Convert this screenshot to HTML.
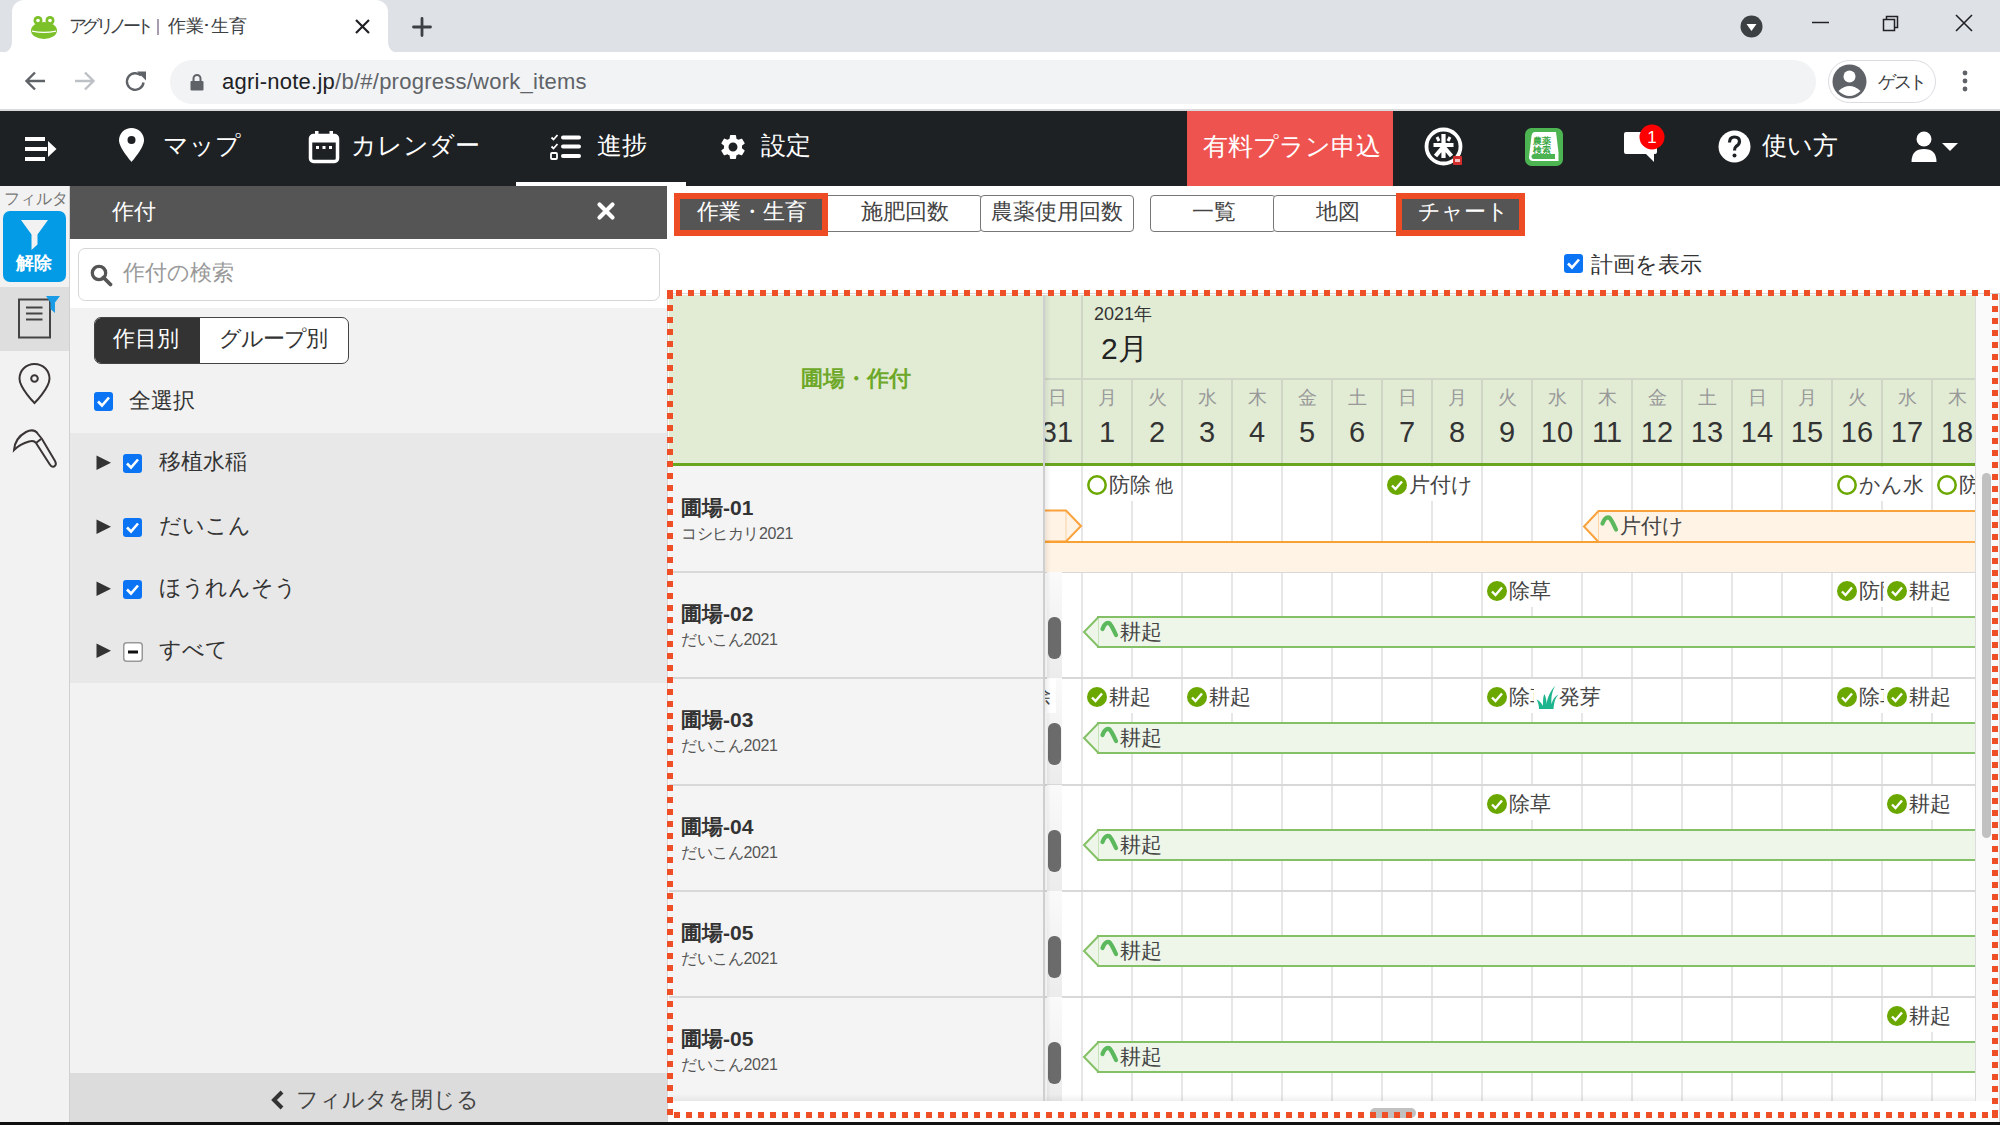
<!DOCTYPE html>
<html><head><meta charset="utf-8">
<style>
*{margin:0;padding:0;box-sizing:border-box}
html,body{width:2000px;height:1125px;overflow:hidden;background:#fff;font-family:"Liberation Sans",sans-serif;color:#333}
.a{position:absolute}
svg{position:absolute;overflow:visible}
.t{position:absolute;white-space:nowrap;line-height:1}
</style></head><body>
<!-- ===== Chrome tab strip ===== -->
<div class="a" style="left:0;top:0;width:2000px;height:53px;background:#dee1e6"></div>
<div class="a" style="left:12px;top:0;width:376px;height:53px;background:#fff;border-radius:12px 12px 0 0"></div>
<svg style="left:0;top:41px" width="12" height="12"><path d="M0 12 Q12 12 12 0 L12 12Z" fill="#fff"/></svg>
<svg style="left:388px;top:41px" width="12" height="12"><path d="M12 12 Q0 12 0 0 L0 12Z" fill="#fff"/></svg>
<!-- frog -->
<svg style="left:31px;top:16px" width="26" height="23" viewBox="0 0 26 23">
<circle cx="7" cy="4.5" r="4.5" fill="#7cc12a"/><circle cx="19" cy="4.5" r="4.5" fill="#7cc12a"/>
<circle cx="7" cy="4.5" r="1.8" fill="#fff"/><circle cx="19" cy="4.5" r="1.8" fill="#fff"/>
<ellipse cx="13" cy="14.5" rx="13" ry="8.5" fill="#7cc12a"/>
<path d="M1 14.5 Q13 17 25 14.5 L25 15.8 Q13 18.3 1 15.8Z" fill="#fff"/>
</svg>
<div class="t" style="left:69px;top:17px;font-size:18px;color:#3c4043;letter-spacing:-4.6px">アグリノート</div><div class="a" style="left:157px;top:19px;width:1.5px;height:16px;background:#a89cb0"></div><div class="t" style="left:168px;top:17px;font-size:18px;color:#3c4043">作<span style="letter-spacing:-2px">業</span><span style="display:inline-block;width:8px;text-align:center;margin-right:1px">･</span>生育</div>
<svg style="left:355px;top:19px" width="15" height="15"><path d="M1 1L14 14M14 1L1 14" stroke="#202124" stroke-width="2.2"/></svg>
<svg style="left:412px;top:17px" width="20" height="20"><path d="M10 1.5V18.5M1.5 10H18.5" stroke="#3c4043" stroke-width="2.8" stroke-linecap="round"/></svg>
<svg style="left:1740px;top:15px" width="23" height="23"><circle cx="11.5" cy="11.5" r="11" fill="#3c4043"/><path d="M6.5 9H16.5L11.5 16Z" fill="#fff"/></svg>
<svg style="left:1812px;top:21px" width="18" height="3"><path d="M0 1.5H17" stroke="#202124" stroke-width="1.5"/></svg>
<svg style="left:1882px;top:14px" width="18" height="18"><path d="M1.5 5.5H12.5V16.5H1.5Z M4.5 5.5V2.5H15.5V13.5H12.5" fill="none" stroke="#202124" stroke-width="1.5"/></svg>
<svg style="left:1955px;top:14px" width="18" height="18"><path d="M1 1L17 17M17 1L1 17" stroke="#202124" stroke-width="1.6"/></svg>
<!-- ===== Toolbar ===== -->
<div class="a" style="left:0;top:52px;width:2000px;height:58px;background:#fff"></div>
<div class="a" style="left:0;top:109px;width:2000px;height:2px;background:#d9dadc"></div>
<svg style="left:24px;top:71px" width="22" height="20"><path d="M21 10H3M11 1.5L2.5 10L11 18.5" fill="none" stroke="#5f6368" stroke-width="2.4"/></svg>
<svg style="left:74px;top:71px" width="22" height="20"><path d="M1 10H19M11 1.5L19.5 10L11 18.5" fill="none" stroke="#bdc1c6" stroke-width="2.4"/></svg>
<svg style="left:124px;top:70px" width="24" height="23"><path d="M19.5 12.5A8.3 8.3 0 1 1 17 5.5" fill="none" stroke="#5f6368" stroke-width="2.4"/><path d="M13 1.5H22V10.5Z" fill="#5f6368"/></svg>
<div class="a" style="left:170px;top:60px;width:1646px;height:44px;background:#f1f3f4;border-radius:22px"></div>
<svg style="left:190px;top:73px" width="14" height="18"><path d="M3.5 8V5.5A3.5 3.5 0 0 1 10.5 5.5V8" fill="none" stroke="#5f6368" stroke-width="2"/><rect x="0.5" y="8" width="13" height="9.5" rx="1" fill="#5f6368"/></svg>
<div class="t" style="left:222px;top:71px;font-size:22px;color:#202124;letter-spacing:0.25px">agri-note.jp<span style="color:#5f6368">/b/#/progress/work_items</span></div>
<div class="a" style="left:1828px;top:60px;width:108px;height:43px;border:1px solid #dadce0;border-radius:22px;background:#fff"></div>
<svg style="left:1832px;top:64px" width="35" height="35"><circle cx="17.5" cy="17.5" r="17" fill="#5f6368"/><circle cx="17.5" cy="12.5" r="6" fill="#fff"/><path d="M6.5 27Q17.5 17 28.5 27Q23 32 17.5 32Q12 32 6.5 27Z" fill="#fff"/></svg>
<div class="t" style="left:1878px;top:73px;font-size:18px;color:#3c4043;letter-spacing:-2.5px">ゲスト</div>
<svg style="left:1961px;top:70px" width="8" height="22"><circle cx="4" cy="3" r="2.4" fill="#5f6368"/><circle cx="4" cy="11" r="2.4" fill="#5f6368"/><circle cx="4" cy="19" r="2.4" fill="#5f6368"/></svg>

<!-- ===== App navbar ===== -->
<div class="a" style="left:0;top:111px;width:2000px;height:75px;background:#1e2124"></div>

<div class="a" style="left:516px;top:182px;width:170px;height:4px;background:#fff"></div>
<div class="a" style="left:1187px;top:111px;width:206px;height:75px;background:#ef5350"></div>
<!-- hamburger arrow -->
<svg style="left:25px;top:136px" width="32" height="26"><rect x="0" y="1" width="20" height="4" fill="#fff"/><rect x="0" y="11" width="22" height="4" fill="#fff"/><rect x="0" y="21" width="20" height="4" fill="#fff"/><path d="M23 5L31.5 13L23 21Z" fill="#fff"/></svg>
<!-- pin -->
<svg style="left:119px;top:128px" width="25" height="34" viewBox="0 0 25 34"><path d="M12.5 0C5.6 0 0 5.5 0 12.3C0 20 12.5 34 12.5 34S25 20 25 12.3C25 5.5 19.4 0 12.5 0Z" fill="#fff"/><circle cx="12.5" cy="12" r="4" fill="#1e2124"/></svg>
<div class="t" style="left:163px;top:133px;font-size:25px;color:#fff">マップ</div>
<!-- calendar -->
<svg style="left:309px;top:131px" width="30" height="32"><rect x="1.5" y="4.5" width="27" height="26" rx="3" fill="none" stroke="#fff" stroke-width="3.5"/><rect x="1.5" y="4.5" width="27" height="7" fill="#fff"/><rect x="6" y="0" width="3.5" height="6" fill="#fff"/><rect x="20.5" y="0" width="3.5" height="6" fill="#fff"/><rect x="7" y="15" width="3" height="3" fill="#fff"/><rect x="13.5" y="15" width="3" height="3" fill="#fff"/><rect x="20" y="15" width="3" height="3" fill="#fff"/></svg>
<div class="t" style="left:351px;top:133px;font-size:25px;color:#fff">カレンダー</div>
<!-- list -->
<svg style="left:550px;top:134px" width="32" height="27"><path d="M1.5 3.5L3.5 5.5L7.5 1M1.5 12.5L3.5 14.5L7.5 10" fill="none" stroke="#fff" stroke-width="1.8"/><rect x="1" y="19" width="6" height="6" rx="1" fill="none" stroke="#fff" stroke-width="1.8"/><rect x="11" y="1.5" width="20" height="4" rx="2" fill="#fff"/><rect x="11" y="10.5" width="20" height="4" rx="2" fill="#fff"/><rect x="11" y="20" width="20" height="4" rx="2" fill="#fff"/></svg>
<div class="t" style="left:597px;top:133px;font-size:25px;color:#fff">進捗</div>
<!-- gear -->
<svg style="left:718px;top:132px" width="30" height="30" viewBox="0 0 24 24"><path fill="#fff" d="M19.14 12.94c.04-.3.06-.61.06-.94 0-.32-.02-.64-.07-.94l2.03-1.58a.49.49 0 0 0 .12-.61l-1.92-3.32a.488.488 0 0 0-.59-.22l-2.39.96c-.5-.38-1.03-.7-1.62-.94l-.36-2.54a.484.484 0 0 0-.48-.41h-3.84c-.24 0-.43.17-.47.41l-.36 2.54c-.59.24-1.13.57-1.62.94l-2.39-.96c-.22-.08-.47 0-.59.22L2.74 8.87c-.12.21-.08.47.12.61l2.03 1.58c-.05.3-.09.63-.09.94s.02.64.07.94l-2.03 1.58a.49.49 0 0 0-.12.61l1.92 3.32c.12.22.37.29.59.22l2.39-.96c.5.38 1.03.7 1.62.94l.36 2.54c.05.24.24.41.48.41h3.84c.24 0 .44-.17.47-.41l.36-2.54c.59-.24 1.13-.56 1.62-.94l2.39.96c.22.08.47 0 .59-.22l1.92-3.32c.12-.22.07-.47-.12-.61l-2.01-1.58zM12 15.6c-1.98 0-3.6-1.62-3.6-3.6s1.62-3.6 3.6-3.6 3.6 1.62 3.6 3.6-1.62 3.6-3.6 3.6z"/></svg>
<div class="t" style="left:761px;top:133px;font-size:25px;color:#fff">設定</div>
<div class="t" style="left:1203px;top:134px;font-size:25px;color:#fff">有料プラン申込</div>
<!-- kome icon -->
<svg style="left:1424px;top:127px" width="40" height="40"><circle cx="19.5" cy="19.5" r="17" fill="none" stroke="#fff" stroke-width="3.8"/><path d="M19.5 7V31M9.5 18H29.5M19.5 19.5L11.5 29M19.5 19.5L27.5 29" stroke="#fff" stroke-width="4.2"/><path d="M13 10L15 14M26 10L24 14" stroke="#fff" stroke-width="3"/><rect x="29" y="29" width="9" height="9" rx="1" fill="#d32f2f"/><rect x="31" y="32" width="5" height="3" fill="#f5c0c0"/></svg>
<!-- book -->
<svg style="left:1525px;top:128px" width="38" height="38"><rect x="0" y="0" width="38" height="38" rx="6.5" fill="#4cb552"/><path d="M10 4H31L33.5 24.5V33H8Q4 33 4 29L6.5 8Q7 4 10 4Z" fill="#fff"/><path d="M9 26H30V31H9Q6.5 31 6.5 28.5Q6.5 26 9 26Z" fill="#4cb552"/><text x="16.5" y="15.5" font-size="8.5" fill="#3aa844" text-anchor="middle" font-weight="bold">農薬</text><text x="16.5" y="24.5" font-size="8.5" fill="#3aa844" text-anchor="middle" font-weight="bold">検索</text></svg>
<!-- chat -->
<svg style="left:1624px;top:130px" width="34" height="33"><path d="M2 2H31Q33 2 33 4V22Q33 24 31 24H30V32L22 24H2Q0 24 0 22V4Q0 2 2 2Z" fill="#fff"/></svg>
<svg style="left:1639px;top:124px" width="26" height="26"><circle cx="13" cy="13" r="12.5" fill="#f00"/><text x="13" y="19" font-size="17" fill="#fff" text-anchor="middle" font-family="Liberation Sans">1</text></svg>
<!-- help -->
<svg style="left:1718px;top:130px" width="33" height="33"><circle cx="16.5" cy="16.5" r="16" fill="#fff"/><path d="M11.5 12.5Q11.5 7 16.5 7Q21.5 7 21.5 11.5Q21.5 14.5 18 16.5Q16.5 17.5 16.5 20.5" fill="none" stroke="#1e2124" stroke-width="3.2"/><circle cx="16.5" cy="25.5" r="2" fill="#1e2124"/></svg>
<div class="t" style="left:1762px;top:133px;font-size:25px;color:#fff">使い方</div>
<!-- user -->
<svg style="left:1910px;top:131px" width="50" height="32"><circle cx="14" cy="8" r="7.5" fill="#fff"/><path d="M1.5 31Q1.5 18 14 18Q26.5 18 26.5 31Z" fill="#fff"/><path d="M32 12H48L40 20Z" fill="#fff"/></svg>

<!-- ===== Left icon strip ===== -->
<div class="a" style="left:0;top:186px;width:70px;height:936px;background:#f2f2f2"></div>
<div class="a" style="left:69px;top:186px;width:1px;height:936px;background:#d0d0d0"></div>
<div class="t" style="left:4px;top:191px;font-size:16px;color:#777">フィルタ</div>
<div class="a" style="left:3px;top:211px;width:63px;height:71px;background:#039be5;border-radius:7px"></div>
<svg style="left:21px;top:220px" width="28" height="32"><path d="M0 0H27L16.5 14.5V24.5L10.5 30V14.5Z" fill="#f2f2f2"/></svg>
<div class="t" style="left:16px;top:254px;font-size:18px;font-weight:bold;color:#fff">解除</div>
<div class="a" style="left:0;top:287px;width:69px;height:64px;background:#dedede"></div>
<svg style="left:18px;top:296px" width="44" height="44"><rect x="1" y="3.5" width="31" height="38" fill="none" stroke="#444" stroke-width="2"/><path d="M8 11.5H24.5M8 17.5H24.5M8 23.5H24.5" stroke="#444" stroke-width="2"/><path d="M28 0H42L37 6.5V17L32.5 13V6.5Z" fill="#1a9be6"/></svg>
<svg style="left:18px;top:363px" width="34" height="42"><path d="M16.5 1C8 1 1.5 7.5 1.5 15.5C1.5 25 16.5 40 16.5 40S31.5 25 31.5 15.5C31.5 7.5 25 1 16.5 1Z" fill="none" stroke="#3a3434" stroke-width="2"/><circle cx="16.5" cy="15.5" r="3.3" fill="none" stroke="#3a3434" stroke-width="2"/></svg>
<svg style="left:12px;top:428px" width="46" height="42"><path d="M2 22Q3 10 14 4Q22 0 26 6L30 11L43 33Q45 37 42 38.5Q39.5 39.5 37.5 36L24 15Q22 12 17 13.5Q8 16 2 22Z" fill="none" stroke="#3a3434" stroke-width="2"/><path d="M24 15L29 11" stroke="#3a3434" stroke-width="2"/></svg>

<!-- ===== Filter panel ===== -->
<div class="a" style="left:70px;top:186px;width:597px;height:936px;background:#f2f2f2"></div>
<div class="a" style="left:70px;top:186px;width:597px;height:53px;background:#555"></div>
<div class="t" style="left:112px;top:201px;font-size:22px;color:#fff">作付</div>
<svg style="left:597px;top:202px" width="18" height="18"><path d="M2.5 2.5L15.5 15.5M15.5 2.5L2.5 15.5" stroke="#fff" stroke-width="4.2" stroke-linecap="round"/></svg>
<div class="a" style="left:70px;top:239px;width:597px;height:69px;background:#fff"></div>
<div class="a" style="left:78px;top:248px;width:582px;height:53px;border:1px solid #d6d6d6;border-radius:7px;background:#fff"></div>
<svg style="left:90px;top:264px" width="23" height="23"><circle cx="9" cy="9" r="6.7" fill="none" stroke="#555" stroke-width="3.3"/><path d="M13.5 13.5L20.5 20.5" stroke="#555" stroke-width="3.8" stroke-linecap="round"/></svg>
<div class="t" style="left:123px;top:262px;font-size:22px;color:#999">作付の検索</div>
<div class="a" style="left:94px;top:317px;width:255px;height:47px;border:1.5px solid #444;border-radius:7px;background:#fff;overflow:hidden"><div class="a" style="left:0;top:0;width:105px;height:47px;background:#333"></div></div>
<div class="t" style="left:113px;top:328px;font-size:22px;color:#fff">作目別</div>
<div class="t" style="left:219px;top:328px;font-size:22px;color:#333;letter-spacing:-1px">グループ別</div>
<svg style="left:94px;top:392px" width="19" height="19"><rect x="0" y="0" width="19" height="19" rx="3" fill="#0b74f5"/><path d="M4 9.5L8 13.5L15 5.5" fill="none" stroke="#fff" stroke-width="2.6"/></svg>
<div class="t" style="left:129px;top:390px;font-size:22px;color:#333">全選択</div>
<div class="a" style="left:70px;top:433px;width:597px;height:250px;background:#e8e8e8"></div>
<svg style="left:96px;top:455px" width="16" height="16"><path d="M0.5 0.5L15 7.8L0.5 15Z" fill="#333"/></svg>
<svg style="left:123px;top:454px" width="19" height="19"><rect x="0" y="0" width="19" height="19" rx="3" fill="#0b74f5"/><path d="M4 9.5L8 13.5L15 5.5" fill="none" stroke="#fff" stroke-width="2.6"/></svg>
<div class="t" style="left:159px;top:451px;font-size:22px;color:#333">移植水稲</div>
<svg style="left:96px;top:519px" width="16" height="16"><path d="M0.5 0.5L15 7.8L0.5 15Z" fill="#333"/></svg>
<svg style="left:123px;top:518px" width="19" height="19"><rect x="0" y="0" width="19" height="19" rx="3" fill="#0b74f5"/><path d="M4 9.5L8 13.5L15 5.5" fill="none" stroke="#fff" stroke-width="2.6"/></svg>
<div class="t" style="left:159px;top:515px;font-size:22px;color:#333">だいこん</div>
<svg style="left:96px;top:581px" width="16" height="16"><path d="M0.5 0.5L15 7.8L0.5 15Z" fill="#333"/></svg>
<svg style="left:123px;top:580px" width="19" height="19"><rect x="0" y="0" width="19" height="19" rx="3" fill="#0b74f5"/><path d="M4 9.5L8 13.5L15 5.5" fill="none" stroke="#fff" stroke-width="2.6"/></svg>
<div class="t" style="left:159px;top:577px;font-size:22px;color:#333">ほうれんそう</div>
<svg style="left:96px;top:643px" width="16" height="16"><path d="M0.5 0.5L15 7.8L0.5 15Z" fill="#333"/></svg>
<svg style="left:123px;top:642px" width="20" height="20"><rect x="0.75" y="0.75" width="18.5" height="18.5" rx="3" fill="#fff" stroke="#999" stroke-width="1.5"/><rect x="5" y="8.5" width="10" height="3" fill="#111"/></svg>
<div class="t" style="left:159px;top:639px;font-size:22px;color:#333">すべて</div>

<div class="a" style="left:70px;top:1073px;width:597px;height:49px;background:#dcdcdc"></div>
<svg style="left:270px;top:1090px" width="15" height="20"><path d="M12 2L4 10L12 18" fill="none" stroke="#333" stroke-width="4"/></svg>
<div class="t" style="left:296px;top:1089px;font-size:22px;color:#444">フィルタを閉じる</div>
<div class="a" style="left:0;top:1122px;width:2000px;height:3px;background:#111"></div>
<!-- CHART -->

<!-- ===== Main: tabs ===== -->
<div class="a" style="left:822px;top:195px;width:160px;height:37px;border:1.5px solid #777;border-radius:4px;background:#fff"></div>
<div class="a" style="left:980px;top:195px;width:154px;height:37px;border:1.5px solid #777;border-radius:4px;background:#fff"></div>
<div class="a" style="left:674px;top:193px;width:154px;height:43px;background:#555;border:6px solid #ee4c24"></div>
<div class="t" style="left:697px;top:201px;font-size:22px;color:#fff">作業・生育</div>
<div class="t" style="left:861px;top:201px;font-size:22px;color:#444">施肥回数</div>
<div class="t" style="left:991px;top:201px;font-size:22px;color:#444">農薬使用回数</div>
<div class="a" style="left:1150px;top:195px;width:126px;height:37px;border:1.5px solid #777;border-radius:4px;background:#fff"></div>
<div class="a" style="left:1273px;top:195px;width:130px;height:37px;border:1.5px solid #777;border-radius:4px;background:#fff"></div>
<div class="a" style="left:1396px;top:193px;width:129px;height:43px;background:#555;border:6px solid #ee4c24"></div>
<div class="t" style="left:1192px;top:201px;font-size:22px;color:#444">一覧</div>
<div class="t" style="left:1316px;top:201px;font-size:22px;color:#444">地図</div>
<div class="t" style="left:1418px;top:201px;font-size:22px;color:#fff">チャート</div>
<svg style="left:1564px;top:254px" width="19" height="19"><rect x="0" y="0" width="19" height="19" rx="3" fill="#0b74f5"/><path d="M4 9.5L8 13.5L15 5.5" fill="none" stroke="#fff" stroke-width="2.6"/></svg>
<div class="t" style="left:1591px;top:254px;font-size:22px;color:#333">計画を表示</div>

<div class="a" style="left:667px;top:293px;width:1333px;height:829px;border-top:1px solid #d6d6d6;border-left:1px solid #d6d6d6;background:#fff"></div>
<div class="a" style="left:1999px;top:293px;width:1px;height:829px;background:#d6d6d6"></div>
<div class="a" style="left:669px;top:295px;width:376px;height:169px;background:#e2ecd5"></div>
<div class="t" style="left:801px;top:368px;font-size:22px;font-weight:bold;color:#6ea829">圃場・作付</div>
<div class="a" style="left:669px;top:466px;width:374px;height:106px;background:#f4f4f4"></div>
<div class="t" style="left:681px;top:497px;font-size:21px;font-weight:bold;color:#333">圃場-01</div>
<div class="t" style="left:681px;top:526px;font-size:16px;color:#555;letter-spacing:-0.4px">コシヒカリ2021</div>
<div class="a" style="left:669px;top:572px;width:374px;height:106px;background:#f4f4f4"></div>
<div class="t" style="left:681px;top:603px;font-size:21px;font-weight:bold;color:#333">圃場-02</div>
<div class="t" style="left:681px;top:632px;font-size:16px;color:#555;letter-spacing:-0.4px">だいこん2021</div>
<div class="a" style="left:669px;top:571px;width:376px;height:2px;background:#d8d8d8"></div>
<div class="a" style="left:669px;top:678px;width:374px;height:106px;background:#f4f4f4"></div>
<div class="t" style="left:681px;top:709px;font-size:21px;font-weight:bold;color:#333">圃場-03</div>
<div class="t" style="left:681px;top:738px;font-size:16px;color:#555;letter-spacing:-0.4px">だいこん2021</div>
<div class="a" style="left:669px;top:677px;width:376px;height:2px;background:#d8d8d8"></div>
<div class="a" style="left:669px;top:785px;width:374px;height:106px;background:#f4f4f4"></div>
<div class="t" style="left:681px;top:816px;font-size:21px;font-weight:bold;color:#333">圃場-04</div>
<div class="t" style="left:681px;top:845px;font-size:16px;color:#555;letter-spacing:-0.4px">だいこん2021</div>
<div class="a" style="left:669px;top:784px;width:376px;height:2px;background:#d8d8d8"></div>
<div class="a" style="left:669px;top:891px;width:374px;height:106px;background:#f4f4f4"></div>
<div class="t" style="left:681px;top:922px;font-size:21px;font-weight:bold;color:#333">圃場-05</div>
<div class="t" style="left:681px;top:951px;font-size:16px;color:#555;letter-spacing:-0.4px">だいこん2021</div>
<div class="a" style="left:669px;top:890px;width:376px;height:2px;background:#d8d8d8"></div>
<div class="a" style="left:669px;top:997px;width:374px;height:104px;background:#f4f4f4"></div>
<div class="t" style="left:681px;top:1028px;font-size:21px;font-weight:bold;color:#333">圃場-05</div>
<div class="t" style="left:681px;top:1057px;font-size:16px;color:#555;letter-spacing:-0.4px">だいこん2021</div>
<div class="a" style="left:669px;top:996px;width:376px;height:2px;background:#d8d8d8"></div>
<div class="a" style="left:1045px;top:295px;width:930px;height:806px;overflow:hidden"><div class="a" style="left:-1045px;top:-295px;width:2000px;height:1125px">
<div class="a" style="left:1045px;top:295px;width:930px;height:169px;background:#e2ecd5"></div>
<div class="a" style="left:1045px;top:378px;width:930px;height:1.5px;background:#cfd6c6"></div>
<div class="a" style="left:1081px;top:295px;width:1.5px;height:169px;background:#cfd6c6"></div>
<div class="a" style="left:1131px;top:379px;width:1.5px;height:85px;background:#cfd6c6"></div>
<div class="a" style="left:1181px;top:379px;width:1.5px;height:85px;background:#cfd6c6"></div>
<div class="a" style="left:1231px;top:379px;width:1.5px;height:85px;background:#cfd6c6"></div>
<div class="a" style="left:1281px;top:379px;width:1.5px;height:85px;background:#cfd6c6"></div>
<div class="a" style="left:1331px;top:379px;width:1.5px;height:85px;background:#cfd6c6"></div>
<div class="a" style="left:1381px;top:379px;width:1.5px;height:85px;background:#cfd6c6"></div>
<div class="a" style="left:1431px;top:379px;width:1.5px;height:85px;background:#cfd6c6"></div>
<div class="a" style="left:1481px;top:379px;width:1.5px;height:85px;background:#cfd6c6"></div>
<div class="a" style="left:1531px;top:379px;width:1.5px;height:85px;background:#cfd6c6"></div>
<div class="a" style="left:1581px;top:379px;width:1.5px;height:85px;background:#cfd6c6"></div>
<div class="a" style="left:1631px;top:379px;width:1.5px;height:85px;background:#cfd6c6"></div>
<div class="a" style="left:1681px;top:379px;width:1.5px;height:85px;background:#cfd6c6"></div>
<div class="a" style="left:1731px;top:379px;width:1.5px;height:85px;background:#cfd6c6"></div>
<div class="a" style="left:1781px;top:379px;width:1.5px;height:85px;background:#cfd6c6"></div>
<div class="a" style="left:1831px;top:379px;width:1.5px;height:85px;background:#cfd6c6"></div>
<div class="a" style="left:1881px;top:379px;width:1.5px;height:85px;background:#cfd6c6"></div>
<div class="a" style="left:1931px;top:379px;width:1.5px;height:85px;background:#cfd6c6"></div>
<div class="t" style="left:1094px;top:305px;font-size:18px;color:#333">2021年</div>
<div class="t" style="left:1101px;top:334px;font-size:30px;color:#222">2月</div>
<div class="t" style="left:1027px;width:60px;text-align:center;top:388px;font-size:19px;color:#999">日</div>
<div class="t" style="left:1017px;width:80px;text-align:center;top:418px;font-size:29px;color:#333">31</div>
<div class="t" style="left:1077px;width:60px;text-align:center;top:388px;font-size:19px;color:#999">月</div>
<div class="t" style="left:1067px;width:80px;text-align:center;top:418px;font-size:29px;color:#333">1</div>
<div class="t" style="left:1127px;width:60px;text-align:center;top:388px;font-size:19px;color:#999">火</div>
<div class="t" style="left:1117px;width:80px;text-align:center;top:418px;font-size:29px;color:#333">2</div>
<div class="t" style="left:1177px;width:60px;text-align:center;top:388px;font-size:19px;color:#999">水</div>
<div class="t" style="left:1167px;width:80px;text-align:center;top:418px;font-size:29px;color:#333">3</div>
<div class="t" style="left:1227px;width:60px;text-align:center;top:388px;font-size:19px;color:#999">木</div>
<div class="t" style="left:1217px;width:80px;text-align:center;top:418px;font-size:29px;color:#333">4</div>
<div class="t" style="left:1277px;width:60px;text-align:center;top:388px;font-size:19px;color:#999">金</div>
<div class="t" style="left:1267px;width:80px;text-align:center;top:418px;font-size:29px;color:#333">5</div>
<div class="t" style="left:1327px;width:60px;text-align:center;top:388px;font-size:19px;color:#999">土</div>
<div class="t" style="left:1317px;width:80px;text-align:center;top:418px;font-size:29px;color:#333">6</div>
<div class="t" style="left:1377px;width:60px;text-align:center;top:388px;font-size:19px;color:#999">日</div>
<div class="t" style="left:1367px;width:80px;text-align:center;top:418px;font-size:29px;color:#333">7</div>
<div class="t" style="left:1427px;width:60px;text-align:center;top:388px;font-size:19px;color:#999">月</div>
<div class="t" style="left:1417px;width:80px;text-align:center;top:418px;font-size:29px;color:#333">8</div>
<div class="t" style="left:1477px;width:60px;text-align:center;top:388px;font-size:19px;color:#999">火</div>
<div class="t" style="left:1467px;width:80px;text-align:center;top:418px;font-size:29px;color:#333">9</div>
<div class="t" style="left:1527px;width:60px;text-align:center;top:388px;font-size:19px;color:#999">水</div>
<div class="t" style="left:1517px;width:80px;text-align:center;top:418px;font-size:29px;color:#333">10</div>
<div class="t" style="left:1577px;width:60px;text-align:center;top:388px;font-size:19px;color:#999">木</div>
<div class="t" style="left:1567px;width:80px;text-align:center;top:418px;font-size:29px;color:#333">11</div>
<div class="t" style="left:1627px;width:60px;text-align:center;top:388px;font-size:19px;color:#999">金</div>
<div class="t" style="left:1617px;width:80px;text-align:center;top:418px;font-size:29px;color:#333">12</div>
<div class="t" style="left:1677px;width:60px;text-align:center;top:388px;font-size:19px;color:#999">土</div>
<div class="t" style="left:1667px;width:80px;text-align:center;top:418px;font-size:29px;color:#333">13</div>
<div class="t" style="left:1727px;width:60px;text-align:center;top:388px;font-size:19px;color:#999">日</div>
<div class="t" style="left:1717px;width:80px;text-align:center;top:418px;font-size:29px;color:#333">14</div>
<div class="t" style="left:1777px;width:60px;text-align:center;top:388px;font-size:19px;color:#999">月</div>
<div class="t" style="left:1767px;width:80px;text-align:center;top:418px;font-size:29px;color:#333">15</div>
<div class="t" style="left:1827px;width:60px;text-align:center;top:388px;font-size:19px;color:#999">火</div>
<div class="t" style="left:1817px;width:80px;text-align:center;top:418px;font-size:29px;color:#333">16</div>
<div class="t" style="left:1877px;width:60px;text-align:center;top:388px;font-size:19px;color:#999">水</div>
<div class="t" style="left:1867px;width:80px;text-align:center;top:418px;font-size:29px;color:#333">17</div>
<div class="t" style="left:1927px;width:60px;text-align:center;top:388px;font-size:19px;color:#999">木</div>
<div class="t" style="left:1917px;width:80px;text-align:center;top:418px;font-size:29px;color:#333">18</div>
<div class="a" style="left:1045px;top:466px;width:930px;height:635px;background:#fff"></div>
<div class="a" style="left:1081px;top:466px;width:2px;height:635px;background:#e6e6e6"></div>
<div class="a" style="left:1131px;top:466px;width:2px;height:635px;background:#e6e6e6"></div>
<div class="a" style="left:1181px;top:466px;width:2px;height:635px;background:#e6e6e6"></div>
<div class="a" style="left:1231px;top:466px;width:2px;height:635px;background:#e6e6e6"></div>
<div class="a" style="left:1281px;top:466px;width:2px;height:635px;background:#e6e6e6"></div>
<div class="a" style="left:1331px;top:466px;width:2px;height:635px;background:#e6e6e6"></div>
<div class="a" style="left:1381px;top:466px;width:2px;height:635px;background:#e6e6e6"></div>
<div class="a" style="left:1431px;top:466px;width:2px;height:635px;background:#e6e6e6"></div>
<div class="a" style="left:1481px;top:466px;width:2px;height:635px;background:#e6e6e6"></div>
<div class="a" style="left:1531px;top:466px;width:2px;height:635px;background:#e6e6e6"></div>
<div class="a" style="left:1581px;top:466px;width:2px;height:635px;background:#e6e6e6"></div>
<div class="a" style="left:1631px;top:466px;width:2px;height:635px;background:#e6e6e6"></div>
<div class="a" style="left:1681px;top:466px;width:2px;height:635px;background:#e6e6e6"></div>
<div class="a" style="left:1731px;top:466px;width:2px;height:635px;background:#e6e6e6"></div>
<div class="a" style="left:1781px;top:466px;width:2px;height:635px;background:#e6e6e6"></div>
<div class="a" style="left:1831px;top:466px;width:2px;height:635px;background:#e6e6e6"></div>
<div class="a" style="left:1881px;top:466px;width:2px;height:635px;background:#e6e6e6"></div>
<div class="a" style="left:1931px;top:466px;width:2px;height:635px;background:#e6e6e6"></div>
<div class="a" style="left:1045px;top:571px;width:930px;height:2px;background:#d8d8d8"></div>
<div class="a" style="left:1045px;top:677px;width:930px;height:2px;background:#d8d8d8"></div>
<div class="a" style="left:1045px;top:784px;width:930px;height:2px;background:#d8d8d8"></div>
<div class="a" style="left:1045px;top:890px;width:930px;height:2px;background:#d8d8d8"></div>
<div class="a" style="left:1045px;top:996px;width:930px;height:2px;background:#d8d8d8"></div>
<div class="a" style="left:1047px;top:572px;width:15px;height:106px;background:linear-gradient(#fafafa,#ececec)"></div>
<div class="a" style="left:1048px;top:617px;width:13px;height:42px;border-radius:6px;background:#6b6b6b"></div>
<div class="a" style="left:1047px;top:678px;width:15px;height:106px;background:linear-gradient(#fafafa,#ececec)"></div>
<div class="a" style="left:1048px;top:723px;width:13px;height:42px;border-radius:6px;background:#6b6b6b"></div>
<div class="a" style="left:1047px;top:785px;width:15px;height:106px;background:linear-gradient(#fafafa,#ececec)"></div>
<div class="a" style="left:1048px;top:830px;width:13px;height:42px;border-radius:6px;background:#6b6b6b"></div>
<div class="a" style="left:1047px;top:891px;width:15px;height:106px;background:linear-gradient(#fafafa,#ececec)"></div>
<div class="a" style="left:1048px;top:936px;width:13px;height:42px;border-radius:6px;background:#6b6b6b"></div>
<div class="a" style="left:1047px;top:997px;width:15px;height:104px;background:linear-gradient(#fafafa,#ececec)"></div>
<div class="a" style="left:1048px;top:1042px;width:13px;height:42px;border-radius:6px;background:#6b6b6b"></div>
<svg style="left:1040px;top:509px" width="45" height="34"><path d="M0 1.5H26L41 17L26 32.5H0" fill="#fff3e5" stroke="#f9a23c" stroke-width="2"/><path d="M26 2.5V32" stroke="#f9a23c" stroke-width="0.6" opacity="0.6"/></svg>
<div class="a" style="left:1045px;top:541px;width:930px;height:31px;background:#fff3e5;border-top:2px solid #f8a032"></div>
<svg style="left:1583px;top:510px" width="402" height="33"><path d="M402 1H15.5L1 16.5L15.5 32H402" fill="#fff3e5" stroke="#f9a23c" stroke-width="2"/><path d="M15.5 2V31" stroke="#f9a23c" stroke-width="0.6" opacity="0.6"/><path d="M19.5 13.5Q22 6.5 26 7.5Q28 8.5 33 19.5" fill="none" stroke="#5cb85c" stroke-width="4.2" stroke-linecap="round"/></svg>
<div class="t" style="left:1620px;top:515px;font-size:21px;color:#444">片付け</div>
<div class="a" style="left:1097px;top:616px;width:878px;height:32px;background:#eef6ea;border-top:2px solid #84c065;border-bottom:2px solid #84c065"></div>
<svg style="left:1083px;top:616px" width="902" height="32"><path d="M902 1H15.5L1 16.0L15.5 31H902" fill="#eef6ea" stroke="#84c065" stroke-width="2"/><path d="M15.5 2V30" stroke="#84c065" stroke-width="0.6" opacity="0.6"/><path d="M19.5 13.0Q22 6.0 26 7.0Q28 8.0 33 19.0" fill="none" stroke="#5cb85c" stroke-width="4.2" stroke-linecap="round"/></svg>
<div class="t" style="left:1120px;top:621px;font-size:21px;color:#444">耕起</div>
<div class="a" style="left:1097px;top:722px;width:878px;height:32px;background:#eef6ea;border-top:2px solid #84c065;border-bottom:2px solid #84c065"></div>
<svg style="left:1083px;top:722px" width="902" height="32"><path d="M902 1H15.5L1 16.0L15.5 31H902" fill="#eef6ea" stroke="#84c065" stroke-width="2"/><path d="M15.5 2V30" stroke="#84c065" stroke-width="0.6" opacity="0.6"/><path d="M19.5 13.0Q22 6.0 26 7.0Q28 8.0 33 19.0" fill="none" stroke="#5cb85c" stroke-width="4.2" stroke-linecap="round"/></svg>
<div class="t" style="left:1120px;top:727px;font-size:21px;color:#444">耕起</div>
<div class="a" style="left:1097px;top:829px;width:878px;height:32px;background:#eef6ea;border-top:2px solid #84c065;border-bottom:2px solid #84c065"></div>
<svg style="left:1083px;top:829px" width="902" height="32"><path d="M902 1H15.5L1 16.0L15.5 31H902" fill="#eef6ea" stroke="#84c065" stroke-width="2"/><path d="M15.5 2V30" stroke="#84c065" stroke-width="0.6" opacity="0.6"/><path d="M19.5 13.0Q22 6.0 26 7.0Q28 8.0 33 19.0" fill="none" stroke="#5cb85c" stroke-width="4.2" stroke-linecap="round"/></svg>
<div class="t" style="left:1120px;top:834px;font-size:21px;color:#444">耕起</div>
<div class="a" style="left:1097px;top:935px;width:878px;height:32px;background:#eef6ea;border-top:2px solid #84c065;border-bottom:2px solid #84c065"></div>
<svg style="left:1083px;top:935px" width="902" height="32"><path d="M902 1H15.5L1 16.0L15.5 31H902" fill="#eef6ea" stroke="#84c065" stroke-width="2"/><path d="M15.5 2V30" stroke="#84c065" stroke-width="0.6" opacity="0.6"/><path d="M19.5 13.0Q22 6.0 26 7.0Q28 8.0 33 19.0" fill="none" stroke="#5cb85c" stroke-width="4.2" stroke-linecap="round"/></svg>
<div class="t" style="left:1120px;top:940px;font-size:21px;color:#444">耕起</div>
<div class="a" style="left:1097px;top:1041px;width:878px;height:32px;background:#eef6ea;border-top:2px solid #84c065;border-bottom:2px solid #84c065"></div>
<svg style="left:1083px;top:1041px" width="902" height="32"><path d="M902 1H15.5L1 16.0L15.5 31H902" fill="#eef6ea" stroke="#84c065" stroke-width="2"/><path d="M15.5 2V30" stroke="#84c065" stroke-width="0.6" opacity="0.6"/><path d="M19.5 13.0Q22 6.0 26 7.0Q28 8.0 33 19.0" fill="none" stroke="#5cb85c" stroke-width="4.2" stroke-linecap="round"/></svg>
<div class="t" style="left:1120px;top:1046px;font-size:21px;color:#444">耕起</div>
<div class="a" style="left:1084px;top:467px;width:93px;height:34px;background:#fff"></div>
<svg style="left:1087px;top:475px" width="20" height="20"><circle cx="10" cy="10" r="8.7" fill="#fff" stroke="#6aa800" stroke-width="2.5"/></svg>
<div class="t" style="left:1109px;top:474px;font-size:21px;color:#444">防除<span style="font-size:18px;margin-left:4px">他</span></div>
<div class="a" style="left:1384px;top:467px;width:93px;height:34px;background:#fff"></div>
<svg style="left:1387px;top:475px" width="20" height="20"><circle cx="10" cy="10" r="10" fill="#6aa800"/><path d="M5 10.5L8.5 14L15 6.5" fill="none" stroke="#fff" stroke-width="2.4"/></svg>
<div class="t" style="left:1409px;top:474px;font-size:21px;color:#444">片付け</div>
<div class="a" style="left:1834px;top:467px;width:93px;height:34px;background:#fff"></div>
<svg style="left:1837px;top:475px" width="20" height="20"><circle cx="10" cy="10" r="8.7" fill="#fff" stroke="#6aa800" stroke-width="2.5"/></svg>
<div class="t" style="left:1859px;top:474px;font-size:21px;color:#444">かん水</div>
<div class="a" style="left:1934px;top:467px;width:72px;height:34px;background:#fff"></div>
<svg style="left:1937px;top:475px" width="20" height="20"><circle cx="10" cy="10" r="8.7" fill="#fff" stroke="#6aa800" stroke-width="2.5"/></svg>
<div class="t" style="left:1959px;top:474px;font-size:21px;color:#444">防除</div>
<div class="a" style="left:1484px;top:573px;width:72px;height:34px;background:#fff"></div>
<svg style="left:1487px;top:581px" width="20" height="20"><circle cx="10" cy="10" r="10" fill="#6aa800"/><path d="M5 10.5L8.5 14L15 6.5" fill="none" stroke="#fff" stroke-width="2.4"/></svg>
<div class="t" style="left:1509px;top:580px;font-size:21px;color:#444">除草</div>
<div class="a" style="left:1834px;top:573px;width:72px;height:34px;background:#fff"></div>
<svg style="left:1837px;top:581px" width="20" height="20"><circle cx="10" cy="10" r="10" fill="#6aa800"/><path d="M5 10.5L8.5 14L15 6.5" fill="none" stroke="#fff" stroke-width="2.4"/></svg>
<div class="t" style="left:1859px;top:580px;font-size:21px;color:#444">防除</div>
<div class="a" style="left:1884px;top:573px;width:72px;height:34px;background:#fff"></div>
<svg style="left:1887px;top:581px" width="20" height="20"><circle cx="10" cy="10" r="10" fill="#6aa800"/><path d="M5 10.5L8.5 14L15 6.5" fill="none" stroke="#fff" stroke-width="2.4"/></svg>
<div class="t" style="left:1909px;top:580px;font-size:21px;color:#444">耕起</div>
<div class="a" style="left:984px;top:679px;width:72px;height:34px;background:#fff"></div>
<svg style="left:987px;top:687px" width="20" height="20"><circle cx="10" cy="10" r="10" fill="#6aa800"/><path d="M5 10.5L8.5 14L15 6.5" fill="none" stroke="#fff" stroke-width="2.4"/></svg>
<div class="t" style="left:1009px;top:686px;font-size:21px;color:#444">防除</div>
<div class="a" style="left:1084px;top:679px;width:72px;height:34px;background:#fff"></div>
<svg style="left:1087px;top:687px" width="20" height="20"><circle cx="10" cy="10" r="10" fill="#6aa800"/><path d="M5 10.5L8.5 14L15 6.5" fill="none" stroke="#fff" stroke-width="2.4"/></svg>
<div class="t" style="left:1109px;top:686px;font-size:21px;color:#444">耕起</div>
<div class="a" style="left:1184px;top:679px;width:72px;height:34px;background:#fff"></div>
<svg style="left:1187px;top:687px" width="20" height="20"><circle cx="10" cy="10" r="10" fill="#6aa800"/><path d="M5 10.5L8.5 14L15 6.5" fill="none" stroke="#fff" stroke-width="2.4"/></svg>
<div class="t" style="left:1209px;top:686px;font-size:21px;color:#444">耕起</div>
<div class="a" style="left:1484px;top:679px;width:72px;height:34px;background:#fff"></div>
<svg style="left:1487px;top:687px" width="20" height="20"><circle cx="10" cy="10" r="10" fill="#6aa800"/><path d="M5 10.5L8.5 14L15 6.5" fill="none" stroke="#fff" stroke-width="2.4"/></svg>
<div class="t" style="left:1509px;top:686px;font-size:21px;color:#444">除草</div>
<div class="a" style="left:1534px;top:679px;width:72px;height:34px;background:#fff"></div>
<svg style="left:1536px;top:685px" width="24" height="25"><path d="M3 24C3 20 2 17 0.5 14.5C4 16 6 19 7 21C7 15 7 11 8.5 9C10 12 10.5 16 10.5 19C11.5 12 15 5 19.5 0.5C16 6 15 12 15.5 19C17 14 19 11 22.5 9.5C19 13 18 18 17.5 24Z" fill="#1cb58e"/></svg>
<div class="t" style="left:1559px;top:686px;font-size:21px;color:#444">発芽</div>
<div class="a" style="left:1834px;top:679px;width:72px;height:34px;background:#fff"></div>
<svg style="left:1837px;top:687px" width="20" height="20"><circle cx="10" cy="10" r="10" fill="#6aa800"/><path d="M5 10.5L8.5 14L15 6.5" fill="none" stroke="#fff" stroke-width="2.4"/></svg>
<div class="t" style="left:1859px;top:686px;font-size:21px;color:#444">除草</div>
<div class="a" style="left:1884px;top:679px;width:72px;height:34px;background:#fff"></div>
<svg style="left:1887px;top:687px" width="20" height="20"><circle cx="10" cy="10" r="10" fill="#6aa800"/><path d="M5 10.5L8.5 14L15 6.5" fill="none" stroke="#fff" stroke-width="2.4"/></svg>
<div class="t" style="left:1909px;top:686px;font-size:21px;color:#444">耕起</div>
<div class="a" style="left:1484px;top:786px;width:72px;height:34px;background:#fff"></div>
<svg style="left:1487px;top:794px" width="20" height="20"><circle cx="10" cy="10" r="10" fill="#6aa800"/><path d="M5 10.5L8.5 14L15 6.5" fill="none" stroke="#fff" stroke-width="2.4"/></svg>
<div class="t" style="left:1509px;top:793px;font-size:21px;color:#444">除草</div>
<div class="a" style="left:1884px;top:786px;width:72px;height:34px;background:#fff"></div>
<svg style="left:1887px;top:794px" width="20" height="20"><circle cx="10" cy="10" r="10" fill="#6aa800"/><path d="M5 10.5L8.5 14L15 6.5" fill="none" stroke="#fff" stroke-width="2.4"/></svg>
<div class="t" style="left:1909px;top:793px;font-size:21px;color:#444">耕起</div>
<div class="a" style="left:1884px;top:998px;width:72px;height:34px;background:#fff"></div>
<svg style="left:1887px;top:1006px" width="20" height="20"><circle cx="10" cy="10" r="10" fill="#6aa800"/><path d="M5 10.5L8.5 14L15 6.5" fill="none" stroke="#fff" stroke-width="2.4"/></svg>
<div class="t" style="left:1909px;top:1005px;font-size:21px;color:#444">耕起</div>
<div class="a" style="left:1045px;top:1094px;width:930px;height:7px;background:linear-gradient(rgba(0,0,0,0),rgba(0,0,0,0.06))"></div>
</div></div>
<div class="a" style="left:669px;top:1094px;width:376px;height:7px;background:linear-gradient(rgba(0,0,0,0),rgba(0,0,0,0.06))"></div>
<div class="a" style="left:669px;top:463px;width:1306px;height:3px;background:#6aa51f"></div>
<div class="a" style="left:1043px;top:295px;width:2px;height:806px;background:#cfcfcf"></div>
<div class="a" style="left:1045px;top:295px;width:6px;height:806px;background:linear-gradient(90deg,rgba(0,0,0,0.07),rgba(0,0,0,0))"></div>
<div class="a" style="left:1975px;top:295px;width:1px;height:806px;background:#dcdcdc"></div>
<div class="a" style="left:1976px;top:295px;width:23px;height:806px;background:#fafafa"></div>
<div class="a" style="left:1982px;top:473px;width:9px;height:365px;border-radius:5px;background:#c1c1c1"></div>
<div class="a" style="left:1370px;top:1108px;width:46px;height:10px;border-radius:5px;background:#c1c1c1"></div>
<svg style="left:0;top:0" width="2000" height="1125"><line x1="676" y1="293" x2="1990" y2="293" stroke="#ef4f26" stroke-width="6" stroke-dasharray="6 6"/><line x1="674" y1="1115" x2="1988" y2="1115" stroke="#ef4f26" stroke-width="6" stroke-dasharray="6 6"/><line x1="670" y1="305" x2="670" y2="1115" stroke="#ef4f26" stroke-width="6" stroke-dasharray="6 6"/><line x1="1995" y1="294" x2="1995" y2="1110" stroke="#ef4f26" stroke-width="6" stroke-dasharray="6 6"/><path d="M667 299V290H673V296L670 299Z" fill="#ef4f26"/><rect x="667" y="290" width="6" height="9" fill="#ef4f26"/><rect x="1992" y="1110" width="6" height="8" fill="#ef4f26"/></svg>
<!-- /CHART -->
</body></html>
